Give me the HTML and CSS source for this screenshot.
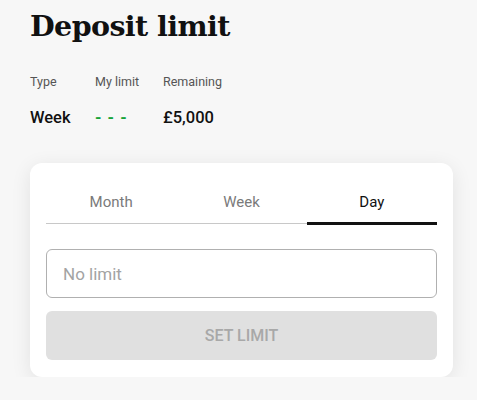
FILE: index.html
```html
<!DOCTYPE html>
<html>
<head>
<meta charset="utf-8">
<link rel="stylesheet" href="styles.css">
</head>
<body>
<main class="page">
  <h1 class="title">Deposit limit</h1>
  <div class="summary">
    <div class="col col-type">
      <div class="label">Type</div>
      <div class="value">Week</div>
    </div>
    <div class="col col-limit">
      <div class="label">My limit</div>
      <div class="value dashes">- - -</div>
    </div>
    <div class="col col-remaining">
      <div class="label">Remaining</div>
      <div class="value">£5,000</div>
    </div>
  </div>
  <section class="card">
    <div class="tabs">
      <div class="tab">Month</div>
      <div class="tab">Week</div>
      <div class="tab active">Day</div>
    </div>
    <input class="field" type="text" placeholder="No limit">
    <button class="btn" disabled>SET LIMIT</button>
  </section>
</main>
</body>
</html>
```
FILE: styles.css
```css
html, body {
  margin: 0;
  padding: 0;
  background: #f7f7f7;
  font-family: Roboto, "Liberation Sans", sans-serif;
}
.page {
  padding: 6px 24px 0 30px;
}
.title {
  margin: 0;
  font-family: "DejaVu Serif", "Liberation Serif", serif;
  font-weight: bold;
  font-size: 28.5px;
  line-height: 40px;
  color: #111;
  letter-spacing: -0.6px;
}
.summary {
  display: flex;
  margin-top: 27px;
}
.col { display: flex; flex-direction: column; }
.col-type { width: 65px; }
.col-limit { width: 68px; }
.label {
  font-size: 12.5px;
  line-height: 18px;
  color: #555;
}
.value {
  margin-top: 17px;
  font-size: 16.5px;
  line-height: 20px;
  font-weight: 500;
  color: #111;
}
.value.dashes {
  color: #16a43a;
  font-weight: 700;
  letter-spacing: 1px;
}
.card {
  margin-top: 35px;
  background: #fff;
  border-radius: 12px;
  box-shadow: 0 4px 20px rgba(0,0,0,0.09);
  padding: 16px 16px 17px;
  display: flex;
  flex-direction: column;
}
.tabs {
  display: flex;
  border-bottom: 1px solid #c8c8c8;
}
.tab {
  flex: 1;
  text-align: center;
  font-size: 15px;
  line-height: 20px;
  padding: 13px 0 10px;
  color: #7a7a7a;
  border-bottom: 3px solid transparent;
  margin-bottom: -2px;
}
.tab.active {
  color: #111;
  border-bottom-color: #111;
}
.field {
  margin-top: 25px;
  height: 49px;
  box-sizing: border-box;
  border: 1px solid #b0b0b0;
  border-radius: 6px;
  padding: 0 16px;
  font-family: Roboto, "Liberation Sans", sans-serif;
  font-size: 17px;
  color: #111;
  background: #fff;
  outline: none;
}
.field::placeholder { color: #a3a3a3; }
.btn {
  margin-top: 13px;
  height: 49px;
  border: none;
  border-radius: 6px;
  background: #e0e0e0;
  color: #a8a8a8;
  font-family: Roboto, "Liberation Sans", sans-serif;
  font-size: 16px;
  font-weight: 500;
}
```
